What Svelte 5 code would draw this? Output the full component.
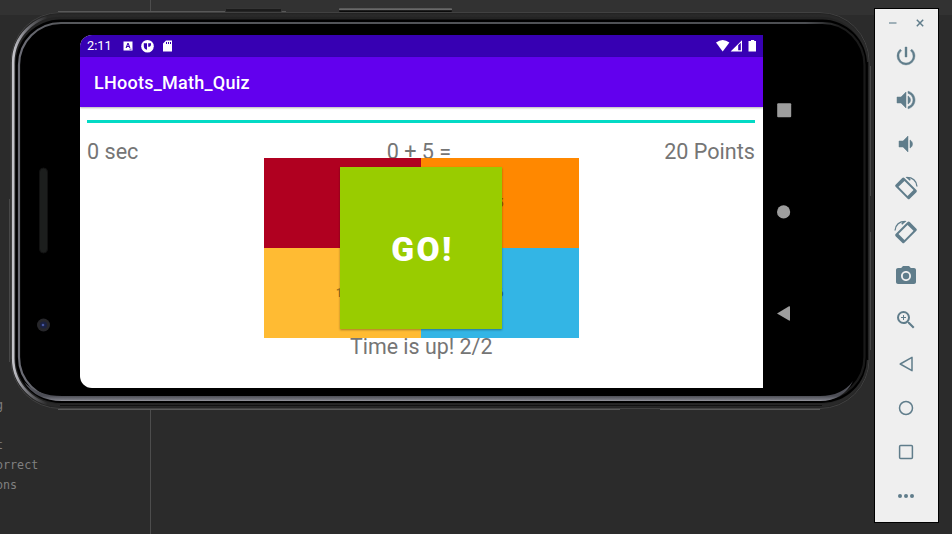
<script>
  const answers = [
    { colour: '#b00020', label: '' },
    { colour: '#ff8800', label: '5' },
    { colour: '#ffbb33', label: '10' },
    { colour: '#33b5e5', label: '6' }
  ];

  const codeLines = ['g', '', 't', 'orrect', 'ons'];

  const tools = [
    'power', 'volumeUp', 'volumeDown', 'rotateLeft', 'rotateRight',
    'camera', 'zoom', 'back', 'home', 'overview', 'more'
  ];
</script>

<main class="desktop">
  <div class="editor-strip"></div>
  <div class="editor-guide"></div>
  <div class="code">
    {#each codeLines as line}
      <div>{line}</div>
    {/each}
  </div>

  <section class="phone">
    <svg class="frame" width="864" height="406" viewBox="8 6 864 406" aria-hidden="true">
      <defs>
        <linearGradient id="rim" x1="0" x2="1" y1="0" y2="0">
          <stop offset="0" stop-color="#c4c4ca" />
          <stop offset=".015" stop-color="#77777d" />
          <stop offset=".04" stop-color="#292929" />
          <stop offset="1" stop-color="#292929" />
        </linearGradient>
        <linearGradient id="bezel" x1="0" x2="1" y1="0" y2="0">
          <stop offset="0" stop-color="#6c6d76" />
          <stop offset=".05" stop-color="#56585c" />
          <stop offset=".93" stop-color="#4c4e52" />
          <stop offset=".97" stop-color="#1c1c1c" />
          <stop offset="1" stop-color="#191919" />
        </linearGradient>
        <linearGradient id="chin" x1="0" x2="0" y1="380" y2="401" gradientUnits="userSpaceOnUse">
          <stop offset="0" stop-color="#55565e" />
          <stop offset=".76" stop-color="#4c4d55" />
          <stop offset=".93" stop-color="#75767f" />
          <stop offset="1" stop-color="#98989f" />
        </linearGradient>
        <linearGradient id="button" x1="0" x2="0" y1="0" y2="1">
          <stop offset="0" stop-color="#525252" />
          <stop offset=".4" stop-color="#6a6a6a" />
          <stop offset=".65" stop-color="#161616" />
          <stop offset="1" stop-color="#050505" />
        </linearGradient>
      </defs>
      <path d="M9.5 199V362M870.5 66V196M870.5 232V350" stroke="#484848" fill="none" />
      <rect x="10.5" y="12" width="859" height="397" rx="50" fill="#242424" />
      <path d="M58 11.500H225M281 11.500H286M58 409.500H620M660 409.500H820" stroke="#585858" fill="none" />
      <rect x="225.500" y="8.500" width="56" height="3.500" rx="1" fill="#1b1b1b" stroke="#3f3f3f" stroke-width=".6" />
      <rect x="339" y="8" width="113" height="4" rx="1" fill="url(#button)" />
      <rect x="11" y="12.500" width="858" height="396" rx="49" fill="none" stroke="#414141" />
      <rect x="13.200" y="15.500" width="854" height="390" rx="47" fill="none" stroke="url(#rim)" stroke-width="2.600" />
      <rect x="15.500" y="19.500" width="851.500" height="383.500" rx="45" fill="#000" />
      <rect x="19" y="23" width="845.500" height="376" rx="42" fill="#000" stroke="url(#bezel)" stroke-width="2.200" />
      <path d="M62 396H820Q842 396 853 381Q843 401 820 401H62Q36 401 24 382Q38 396 62 396Z" fill="url(#chin)" />
      <path d="M60 405.500H822" stroke="#111" />
      <path d="M867.500 62V360" stroke="#050505" stroke-width="1.500" />
      <rect x="39.500" y="168" width="8" height="85" rx="4" fill="#1c1e1d" stroke="#111" />
      <circle cx="43.500" cy="325" r="6.500" fill="#27272b" />
      <circle cx="43.500" cy="325" r="3.600" fill="#1b2140" />
      <circle cx="43" cy="325" r="1.300" fill="#4556a0" />
    </svg>

    <div class="screen">
      <header class="status">
        <span class="clock">2:11</span>
        <svg width="50" height="14" viewBox="0 0 50 14" fill="#fff">
          <path fill-rule="evenodd" d="M.5 2.500H9.500V11.500H.5ZM4.400 4L2.600 9H3.700L4.100 8H5.900L6.300 9H7.400L5.600 4ZM4.400 7H5.600L5 5.200ZM6.500 9.800V10.400H8.500V9.800Z" />
          <circle cx="24.500" cy="7.200" r="6.300" />
          <path d="M20.800 4.300H24V10.800Q20.800 10 20.800 7ZM25.200 4.300H28V5.200Q28 7.800 25.200 7.800Z" fill="#3700b3" />
          <path fill-rule="evenodd" d="M43 1.500H49V12.500H40V4.500ZM43 3V5H44V3ZM45 3V5H46V3ZM47 3V5H48V3Z" />
        </svg>
        <svg class="signals" width="42" height="14" viewBox="0 0 42 14" fill="#fff">
          <path d="M1 3.500Q7.700-1.500 14.400 3.500L7.700 12.500Z" />
          <path fill-rule="evenodd" d="M15.600 12.500L27 1.200V12.500ZM23.200 6.300V11.200H25.800V3.700Z" />
          <path d="M35 2H36V1H39.200V2H41V12.500H33.500V2Z" />
        </svg>
      </header>
      <div class="appbar">LHoots_Math_Quiz</div>
      <div class="content">
        <div class="progress"></div>
        <div class="row">
          <span>0 sec</span><span class="question">0 + 5 =</span><span>20 Points</span>
        </div>
        <div class="board">
          {#each answers as answer}
            <div class="tile" style:background={answer.colour}>{answer.label}</div>
          {/each}
          <button class="go">GO!</button>
        </div>
        <div class="result">Time is up! 2/2</div>
      </div>
    </div>

    <svg class="nav" width="16" height="220" viewBox="0 0 16 220" fill="#9d9d9d">
      <rect x="1.200" y="1.200" width="14" height="14" rx="1" />
      <circle cx="7.600" cy="109.900" r="6.600" />
      <path d="M1 211.500L13 204.300Q14 204 14 205V218Q14 219 13 218.500Z" />
    </svg>
  </section>

  <aside class="toolbar">
    <div class="window-buttons">
      <svg width="9" height="10" viewBox="0 0 9 10"><path d="M1 5H8.500" stroke="#9fb0b8" stroke-width="2" /></svg>
      <svg width="10" height="10" viewBox="0 0 10 10"><path d="M1.800 1.800L8.200 8.200M8.200 1.800L1.800 8.200" stroke="#607d8b" stroke-width="1.500" /></svg>
    </div>
    {#each tools as tool}
      <div class="tool">
        <svg width="24" height="24" viewBox="0 0 24 24" fill="#607d8b">
          {#if tool === 'power'}
            <path d="M13 3h-2v10h2V3zm4.830 2.170l-1.420 1.420A6.920 6.920 0 0 1 19 12c0 3.870-3.130 7-7 7A6.995 6.995 0 0 1 7.580 6.580L6.170 5.170A8.932 8.932 0 0 0 3 12a9 9 0 0 0 18 0c0-2.740-1.230-5.180-3.170-6.830z" stroke="#607d8b" stroke-width=".4" />
          {:else if tool === 'volumeUp'}
            <path d="M3 9v6h4l5 5V4L7 9H3zm13.500 3c0-1.770-1.020-3.290-2.500-4.030v8.050c1.480-.730 2.500-2.250 2.500-4.020zM14 3.230v2.060c2.890.860 5 3.540 5 6.710s-2.110 5.850-5 6.710v2.060c4.010-.910 7-4.490 7-8.770s-2.990-7.860-7-8.770z" stroke="#607d8b" stroke-width=".5" />
          {:else if tool === 'volumeDown'}
            <path d="M18.500 12c0-1.770-1.020-3.290-2.500-4.030v8.050c1.480-.730 2.500-2.250 2.500-4.020zM5 9v6h4l5 5V4L9 9H5z" stroke="#607d8b" stroke-width=".5" />
          {:else if tool === 'rotateLeft' || tool === 'rotateRight'}
            <g transform={tool === 'rotateRight' ? 'translate(24 0) scale(-1 1)' : null}>
              <path transform="rotate(45 12 12.400)" fill-rule="evenodd" d="M3.500 6.200H20.500Q22 6.200 22 7.700V17.100Q22 18.600 20.500 18.600H3.500Q2 18.600 2 17.100V7.700Q2 6.200 3.500 6.200ZM5.600 8.200V16.600H18.400V8.200Z" />
              <path d="M12.500 1.400Q22 1.400 23 10.500" fill="none" stroke="#607d8b" stroke-width="1.300" />
              <path d="M11.500 .9L15.800 4.700L16.700 3.800L15 1.300Z" />
            </g>
          {:else if tool === 'camera'}
            <circle cx="12" cy="12" r="3.200" />
            <path d="M9 2L7.170 4H4c-1.100 0-2 .900-2 2v12c0 1.100.900 2 2 2h16c1.100 0 2-.900 2-2V6c0-1.100-.900-2-2-2h-3.170L15 2H9zm3 15c-2.760 0-5-2.240-5-5s2.240-5 5-5 5 2.240 5 5-2.240 5-5 5z" />
          {:else if tool === 'zoom'}
            <path d="M15.500 14h-.790l-.280-.270A6.471 6.471 0 0 0 16 9.500 6.500 6.500 0 1 0 9.500 16c1.610 0 3.090-.590 4.230-1.570l.270.280v.790l5 4.990L20.490 19l-4.990-5zm-6 0C7.010 14 5 11.990 5 9.500S7.010 5 9.500 5 14 7.010 14 9.500 11.990 14 9.500 14zM12 10h-2v2H9v-2H7V9h2V7h1v2h2v1z" />
          {:else if tool === 'back'}
            <path d="M6.200 12L18 5.300V18.700Z" fill="none" stroke="#607d8b" stroke-width="1.500" stroke-linejoin="round" />
          {:else if tool === 'home'}
            <circle cx="12" cy="12" r="6.500" fill="none" stroke="#607d8b" stroke-width="1.500" />
          {:else if tool === 'overview'}
            <rect x="5.600" y="5.600" width="12.800" height="12.800" rx="1" fill="none" stroke="#607d8b" stroke-width="1.500" />
          {:else}
            <circle cx="6" cy="12" r="2" /><circle cx="12" cy="12" r="2" /><circle cx="18" cy="12" r="2" />
          {/if}
        </svg>
      </div>
    {/each}
  </aside>
</main>

<style>
  .desktop {
    position: relative;
    width: 952px;
    height: 534px;
    overflow: hidden;
    background: #2b2b2b;
    font-family: Roboto, sans-serif;
  }
  .editor-strip { height: 15px; background: #323232; }
  .editor-guide {
    position: absolute;
    left: 150px;
    top: 0;
    width: 1px;
    height: 534px;
    background: #4d4d4d;
  }
  .code {
    position: absolute;
    left: -4px;
    top: 395px;
    color: #808080;
    font: 11.7px/20px "DejaVu Sans Mono", monospace;
  }
  .code div { width: max-content; height: 20px; }
  .phone { position: absolute; left: 8px; top: 6px; width: 864px; height: 406px; }
  .frame { display: block; }
  .screen {
    position: absolute;
    left: 72px;
    top: 29px;
    width: 683px;
    height: 353px;
    border-radius: 12px 0 0 12px;
    overflow: hidden;
    background: #fff;
    display: flex;
    flex-direction: column;
  }
  .status {
    box-sizing: border-box;
    height: 22px;
    padding: 0 6px 0 7px;
    background: #3700b3;
    color: #fff;
    display: flex;
    align-items: center;
  }
  .clock { width: 36px; font-size: 12.8px; line-height: 22px; }
  .signals { margin-left: auto; }
  .appbar {
    height: 50px;
    padding-left: 14px;
    background: #6200ee;
    color: #fff;
    font-size: 18px;
    font-weight: 500;
    letter-spacing: 0.25px;
    line-height: 51px;
    box-shadow: 0 1px 2px rgba(0, 0, 0, 0.3);
  }
  .content { padding: 13px 8px 0 7px; color: #757575; font-size: 21.6px; }
  .progress { height: 3px; background: #03dac5; }
  .row {
    display: grid;
    grid-template-columns: 1fr auto 1fr;
    height: 35px;
    padding-top: 16px;
    box-sizing: border-box;
    line-height: 26px;
  }
  .question { margin-right: 4px; }
  .row span:last-child { text-align: right; }
  .board {
    position: relative;
    width: 315px;
    height: 180px;
    margin-left: 177px;
    display: grid;
    grid-template-columns: 157.4px 157.6px;
    grid-template-rows: 89.7px 90.3px;
  }
  .tile {
    display: flex;
    align-items: center;
    justify-content: center;
    color: rgba(0, 0, 0, 0.4);
    font-size: 12px;
    font-weight: 700;
    padding-top: 1px;
    box-sizing: border-box;
  }
  .go {
    position: absolute;
    left: 76px;
    top: 9px;
    width: 162px;
    height: 162px;
    padding: 2px 0 0 3px;
    border: 0;
    background: #99cc00;
    color: #fff;
    font: 900 33.5px Roboto, sans-serif;
    letter-spacing: 2.4px;
    box-shadow: 0 1px 2px rgba(0, 0, 0, 0.35);
  }
  .result { margin-left: 263px; font-size: 21.4px; line-height: 17px; }
  .nav { position: absolute; left: 768px; top: 96px; }
  .toolbar {
    position: absolute;
    left: 874px;
    top: 8px;
    box-sizing: border-box;
    width: 65px;
    height: 515px;
    border: 1px solid #000;
    background: #efefef;
  }
  .window-buttons {
    display: flex;
    align-items: center;
    justify-content: space-between;
    height: 25px;
    padding: 2px 13px 0 13px;
    box-sizing: border-box;
  }
  .tool {
    display: flex;
    align-items: center;
    justify-content: center;
    height: 44px;
  }
  .tool svg { margin-right: 1px; }
</style>
